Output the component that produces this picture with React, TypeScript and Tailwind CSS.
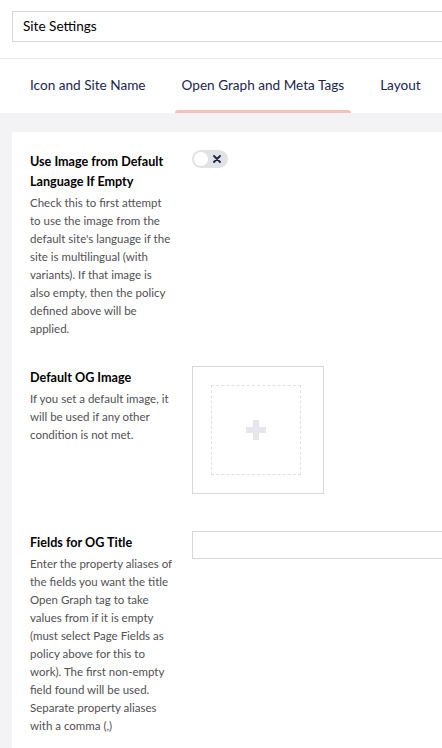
import React from "react";

const tabs = ["Icon and Site Name", "Open Graph and Meta Tags", "Layout"];

function Property({
  title,
  description,
  children,
  className = "",
}: {
  title: string;
  description: string;
  children: React.ReactNode;
  className?: string;
}) {
  return (
    <div className={`flex ${className}`}>
      <div className="w-[144px] shrink-0 mr-[18px] pt-[2px]">
        <div className="text-[12.6px] leading-[20px] font-bold text-black">{title}</div>
        <div className="mt-[2px] text-[11.5px] leading-[18px] text-[#515054]">{description}</div>
      </div>
      <div className="flex-1">{children}</div>
    </div>
  );
}

export default function App() {
  return (
    <div className="w-[442px] h-[748px] overflow-hidden bg-white font-['Lato',sans-serif]">
      {/* Header */}
      <div className="h-[59px] border-b border-[#e9e9eb] px-[12px] pt-[11px]">
        <div className="w-[520px] h-[31px] border border-[#d8d7d9] flex items-center pl-[10px] text-[13.6px] text-black">
          Site Settings
        </div>
      </div>

      {/* Tabs */}
      <div className="h-[54px] flex px-[12px]">
        {tabs.map((tab, i) => (
          <div
            key={tab}
            className="relative h-full flex items-center px-[18px] pb-[1px] shrink-0 text-[13.6px] text-[#1b264f]"
          >
            {tab}
            {i === 1 && (
              <div className="absolute bottom-0 left-[11px] right-[11px] h-[3px] rounded-t-[3px] bg-[#f5c1bc]" />
            )}
          </div>
        ))}
      </div>

      {/* Content */}
      <div className="bg-[#f3f3f5] h-full pl-[12px] pt-[19px]">
        <div className="w-[520px] h-full bg-white pl-[18px] pt-[18px]">
          <Property
            className="mb-[28px]"
            title="Use Image from Default Language If Empty"
            description="Check this to first attempt to use the image from the default site's language if the site is multilingual (with variants). If that image is also empty, then the policy defined above will be applied."
          >
            <div className="relative w-[36px] h-[18px] rounded-full bg-[#e2e2e4]">
              <div className="absolute left-[2px] top-[2px] w-[14px] h-[14px] rounded-full bg-white" />
              <svg
                className="absolute right-[7px] top-[5px]"
                width="8"
                height="8"
                viewBox="0 0 8 8"
              >
                <path d="M1 1L7 7M7 1L1 7" stroke="#1b264f" strokeWidth="1.8" strokeLinecap="round" />
              </svg>
            </div>
          </Property>

          <Property
            className="mb-[37px]"
            title="Default OG Image"
            description="If you set a default image, it will be used if any other condition is not met."
          >
            <div className="w-[132px] h-[128px] border border-[#d8d7d9] pl-[18px] pt-[18px]">
              <div className="w-[90px] h-[90px] border border-dashed border-[#e2e2e4] flex items-center justify-center">
                <svg width="20" height="20" viewBox="0 0 20 20">
                  <rect x="7" y="0" width="6" height="20" fill="#e6e6ec" />
                  <rect x="0" y="7" width="20" height="6" fill="#e6e6ec" />
                </svg>
              </div>
            </div>
          </Property>

          <Property
            title="Fields for OG Title"
            description="Enter the property aliases of the fields you want the title Open Graph tag to take values from if it is empty (must select Page Fields as policy above for this to work). The first non-empty field found will be used. Separate property aliases with a comma (,)"
          >
            <div className="w-[320px] h-[28px] border border-[#d8d7d9]" />
          </Property>
        </div>
      </div>
    </div>
  );
}
